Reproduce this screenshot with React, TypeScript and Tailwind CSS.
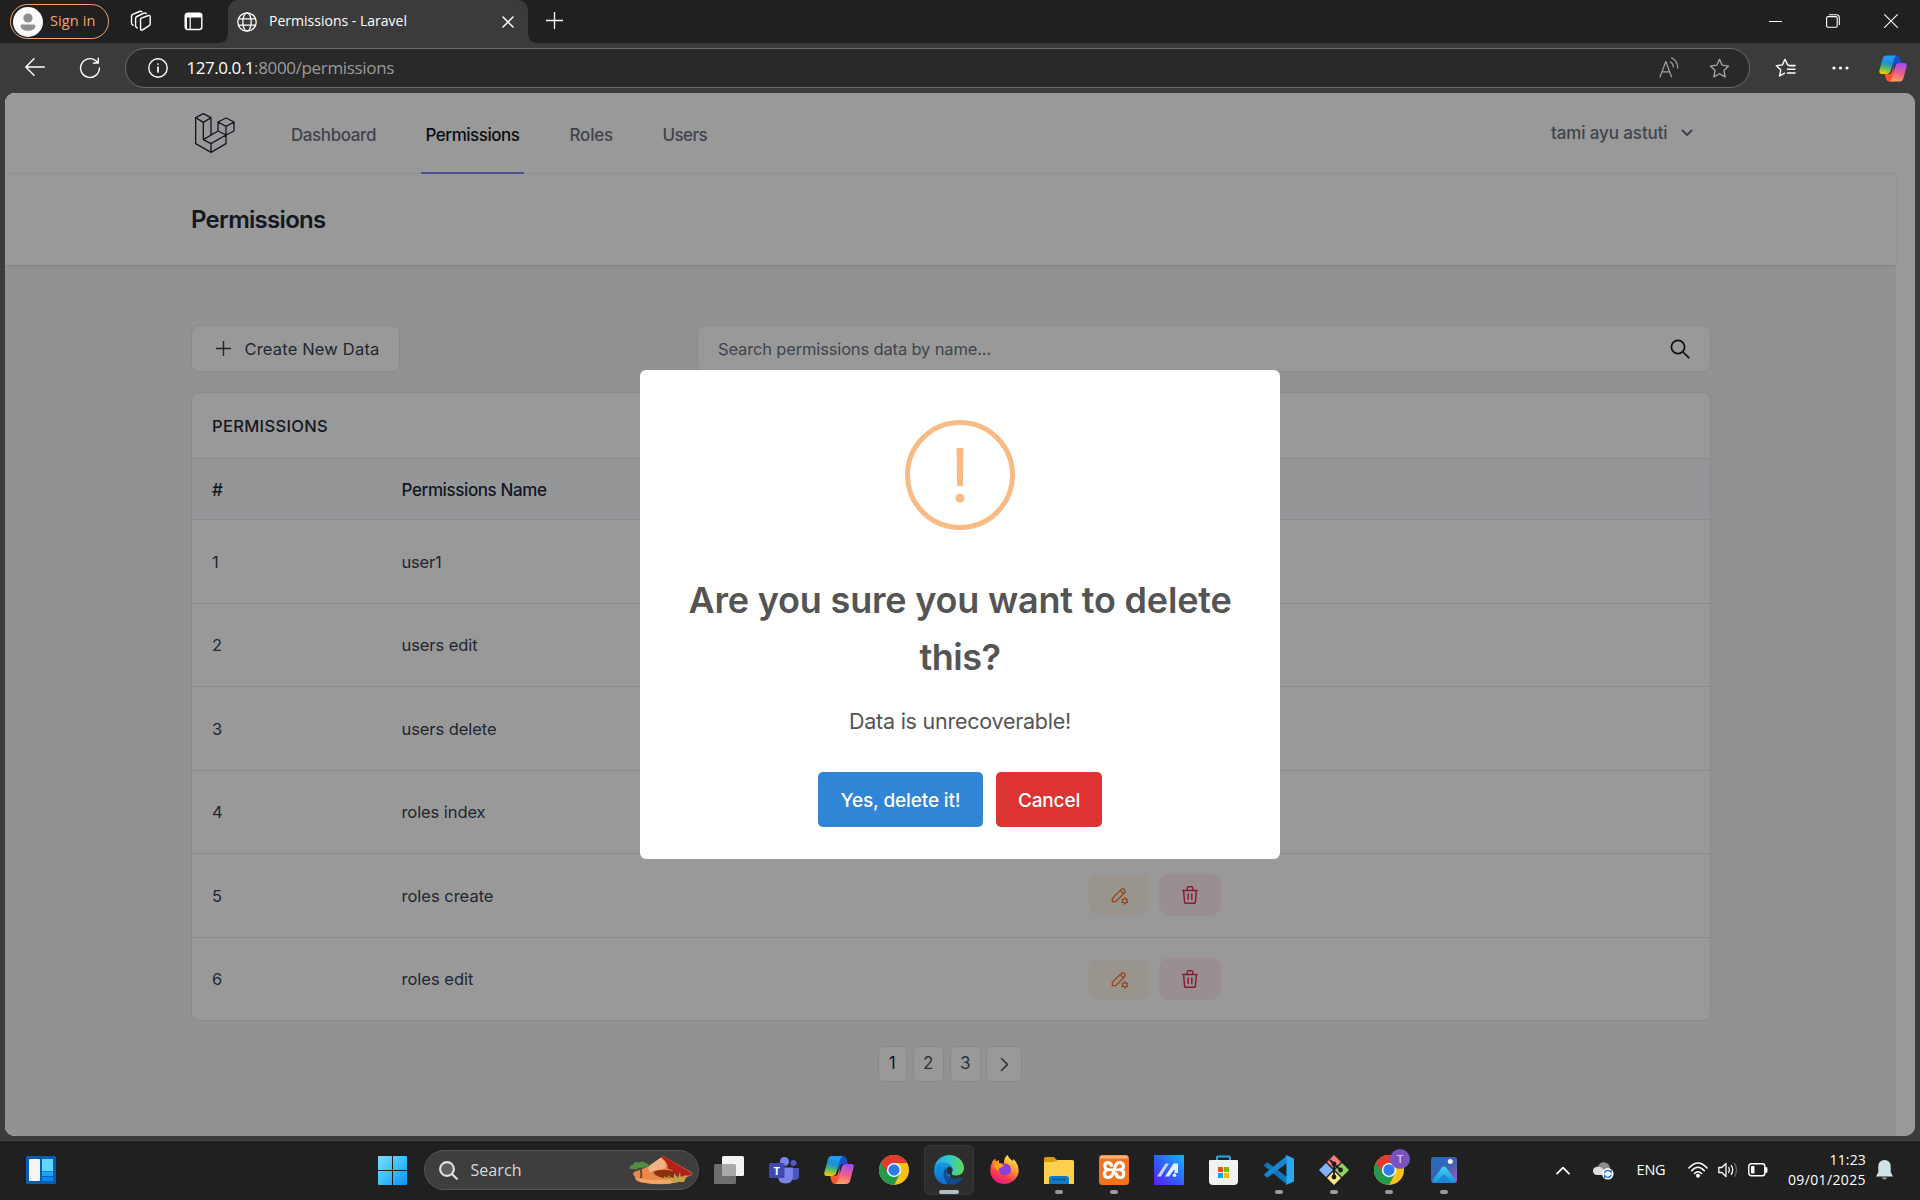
import React, { useLayoutEffect, useRef, useState } from "react";

/** Single line of text tracked so that it fills the given width. */
function Fit({ w, className = "", children }: { w: number; className?: string; children: string }) {
  const ref = useRef<HTMLSpanElement>(null);
  const [spacing, setSpacing] = useState(0);
  useLayoutEffect(() => {
    const el = ref.current;
    if (!el) return;
    const natural = el.getBoundingClientRect().width;
    setSpacing((w - natural) / children.length);
  }, []);
  return (
    <span ref={ref} className={"inline-block whitespace-nowrap " + className} style={{ letterSpacing: spacing + "px" }}>
      {children}
    </span>
  );
}

const line = { fill: "none", stroke: "currentColor", strokeLinecap: "round" as const, strokeLinejoin: "round" as const };

function TitleBar() {
  return (
    <div className="flex h-[43px] shrink-0 items-start bg-[#202020] text-white">
      <div className="mt-1 ml-[10px] flex h-[35px] w-[99px] shrink-0 items-center rounded-full border-[1.5px] border-[#f3a36b] pl-[2px]">
        <svg className="size-[30px] shrink-0" viewBox="0 0 30 30">
          <circle cx="15" cy="15" r="15" fill="#fafafa" />
          <circle cx="15" cy="11" r="4.6" fill="#8f8f8f" />
          <path d="M9 17.4h12q1.4 0 1.4 1.4c0 3-3 5-7.4 5s-7.4-2-7.4-5q0-1.4 1.4-1.4z" fill="#8f8f8f" />
        </svg>
        <Fit w={45.5} className="mb-px ml-[7px] text-[14.5px] leading-[20px] text-[#f3a36b]">Sign in</Fit>
      </div>
      <svg className="mt-[10px] ml-[21px] size-[23px] shrink-0" viewBox="0 0 23 23" {...line} strokeWidth="1.4">
        <path d="M10.5 9.6q0-1 .9-1.4l7-2.7q1.8-.5 1.8 1.2v7.4q0 1.1-1 1.6l-6.6 4.2q-2 1-2-1z" />
        <path d="M7.3 18l-.5-.3q-1.2-.7-1.2-2V8.5q0-1.500 1.300-2l7-3.300q1.600-.6 2.300.3" />
        <path d="M3.200 15.300q-1.700-.7-1.700-2.300V6.200q0-1.300 1.200-1.900L9.500 1.500q1.400-.5 2.200.2" />
      </svg>
      <svg className="mt-[12px] ml-[31px] size-[19px] shrink-0" viewBox="0 0 19 19" fill="none">
        <rect x="1.200" y="1.200" width="16.600" height="16.300" rx="2.500" stroke="#fff" strokeWidth="1.400" />
        <path d="M1 5.500V3q0-2 2-2h13q2 0 2 2v2.500zM1 5h2v12H2z" fill="#fff" />
        <path d="M6.200 5v12.500" stroke="#fff" strokeWidth="1.200" />
      </svg>
      <svg className="ml-[15px] h-[43px] w-[10px] shrink-0" viewBox="0 0 10 43">
        <path d="M0 43Q10 43 10 33V43z" fill="#3b3b3b" />
      </svg>
      <div className="flex h-[43px] w-[300px] shrink-0 items-center rounded-t-[10px] bg-[#3b3b3b] pl-[9px]">
        <svg className="size-[20px] shrink-0" viewBox="0 0 20 20" {...line} strokeWidth="1.300">
          <circle cx="10" cy="10" r="9.200" />
          <ellipse cx="10" cy="10" rx="4.200" ry="9.200" />
          <path d="M1.500 6.800h17M1.500 13.200h17" />
        </svg>
        <Fit w={138} className="mb-[2px] ml-[12px] text-[14px] leading-[20px]">Permissions - Laravel</Fit>
        <svg className="ml-[95px] size-[12px] shrink-0" viewBox="0 0 12 12" {...line} strokeWidth="1.500">
          <path d="M1 1l10 10M11 1L1 11" />
        </svg>
      </div>
      <svg className="h-[43px] w-[10px] shrink-0" viewBox="0 0 10 43">
        <path d="M10 43Q0 43 0 33V43z" fill="#3b3b3b" />
      </svg>
      <svg className="mt-[12px] ml-[8px] size-[17px] shrink-0" viewBox="0 0 17 17" stroke="#fff" strokeWidth="1.300">
        <path d="M8.500 0v17M0 8.500h17" />
      </svg>
      <div className="ml-auto flex h-[42px] shrink-0 items-center pr-[22px]">
        <svg className="h-[14px] w-[13px]" viewBox="0 0 13 14" stroke="#fff">
          <path d="M0 7.500h13" />
        </svg>
        <svg className="ml-[44px] size-[14px]" viewBox="0 0 14 14" fill="none" stroke="#fff" strokeWidth="1.100">
          <rect x=".6" y="2.600" width="10.600" height="10.600" rx="1.500" />
          <path d="M3 .7h7.500q2.800 0 2.800 2.800V11" />
        </svg>
        <svg className="ml-[44px] size-[14px]" viewBox="0 0 14 14" {...line} strokeWidth="1.100">
          <path d="M.6.6l12.800 12.800M13.400.6L.6 13.400" />
        </svg>
      </div>
    </div>
  );
}

function Copilot({ id, className }: { id: string; className: string }) {
  return (
    <svg className={className} viewBox="0 0 30 28">
      <defs>
        <linearGradient id={id + "a"} x1="0.500" y1="0" x2="0.300" y2="1">
          <stop offset="0" stopColor="#1ea0f2" />
          <stop offset=".4" stopColor="#1f8fd8" />
          <stop offset=".65" stopColor="#4fb56a" />
          <stop offset="1" stopColor="#f4cf00" />
        </linearGradient>
        <linearGradient id={id + "b"} x1="0.600" y1="0" x2="0.400" y2="1">
          <stop offset="0" stopColor="#a04ef0" />
          <stop offset=".5" stopColor="#ec5a8e" />
          <stop offset="1" stopColor="#ffa15c" />
        </linearGradient>
      </defs>
      <path d="M14 0h5q2.500 0 3.300 2.600L24 8h-5q-2 0-2.700 2l-2 6z" fill="#1750c9" />
      <path d="M16 28h-5q-2.500 0-3.300-2.600L6 20h5q2 0 2.700-2l2-6z" fill="#f8562f" />
      <path d="M8 0h11q-2 .5-2.700 3l-4 14q-1 3-4 3H3q-3.500 0-2.500-4L4 3q1-3 4-3z" fill={`url(#${id}a)`} />
      <path d="M22 28H11q2-.5 2.700-3l4-14q1-3 4-3H27q3.500 0 2.500 4L26 25q-1 3-4 3z" fill={`url(#${id}b)`} />
    </svg>
  );
}

const star = "M10 1.300l2.600 5.600 6.100.8-4.500 4.200 1.200 6.100L10 15l-5.400 3 1.200-6.100L1.300 7.700l6.100-.8z";

function Toolbar() {
  return (
    <div className="flex h-[50px] shrink-0 items-center bg-[#3b3b3b] text-white">
      <svg className="mb-[2px] ml-[25px] h-[18px] w-[20px] shrink-0" viewBox="0 0 20 18" {...line} strokeWidth="1.400">
        <path d="M19.300 9H.8M9 .8L.8 9l8.200 8.200" />
      </svg>
      <svg className="mb-px ml-[34px] size-[22px] shrink-0" viewBox="0 0 22 22" {...line} strokeWidth="1.400">
        <path d="M20.400 11a9.400 9.400 0 1 1-3.500-7.300L19.300 6M19.300 1.200V6h-4.900" />
      </svg>
      <div className="ml-[24px] flex h-[40px] w-[1625px] shrink-0 items-center rounded-full border border-[#696969] bg-[#292929]">
        <svg className="ml-[21.500px] size-[20px] shrink-0" viewBox="0 0 20 20" {...line} strokeWidth="1.400">
          <circle cx="10" cy="10" r="9.200" />
          <path d="M10 9v5M10 6v.1" strokeWidth="1.700" />
        </svg>
        <div className="ml-[19px] flex text-[17px] leading-[24px]">
          <Fit w={67.500}>127.0.0.1</Fit>
          <Fit w={140} className="text-[#9a9a9a]">:8000/permissions</Fit>
        </div>
        <svg className="mr-[30px] mb-px ml-auto h-[21px] w-[20px] shrink-0 text-[#a0a0a0]" viewBox="0 0 20 21" {...line} strokeWidth="1.200">
          <path d="M1 20L6.800 4.500 12.600 20M3 14.800h7.600M11.500 5q2.800 1.600 2.800 5M12.500.8Q18.600 3.800 18.800 11" />
        </svg>
        <svg className="mr-[19.500px] size-[21px] shrink-0 text-[#a8a8a8]" viewBox="0 0 20 20" {...line} strokeWidth="1.200">
          <path d={star} />
        </svg>
      </div>
      <svg className="ml-[24.500px] h-[22px] w-[21px] shrink-0" viewBox="0 0 21 20" {...line} strokeWidth="1.400">
        <path d="M20 7.500h-5.500l-1.900-.6L10 1.300 7.400 6.900l-6.100.8 4.500 4.200L4.600 18l5-2.800M12.500 11.300H20M12.500 15H20M14 7.700h6" />
      </svg>
      <svg className="ml-[36px] h-[4px] w-[17px] shrink-0" viewBox="0 0 17 4" fill="#fff">
        <circle cx="2" cy="2" r="1.600" /><circle cx="8.500" cy="2" r="1.600" /><circle cx="15" cy="2" r="1.600" />
      </svg>
      <Copilot id="cpt" className="ml-[30px] h-[27px] w-[28px] shrink-0" />
    </div>
  );
}

function Nav() {
  return (
    <div className="flex h-[81px] w-[1891px] shrink-0 items-center border-b border-gray-100 bg-white pl-[186px] text-[17px] font-[450] text-gray-500">
      <svg className="ml-[4px] size-[40px] shrink-0 text-gray-800" viewBox="587 340 120 120" {...line} strokeWidth="4">
        <path d="M612 342l23 12-23 14-23-14zM589 354v78l46 26 45-26v-26M612 368v52l23 12v26M635 354v52M612 420l44-26M635 432l45-26M680 355l24 12-24 13-24-13zM704 367v27l-24 12-24-12v-27M680 380v26" />
      </svg>
      <Fit w={85} className="mt-[5px] ml-[56px]">Dashboard</Fit>
      <div className="mt-[1px] ml-[45px] flex h-[81px] w-[103px] items-center border-b-[2.500px] border-indigo-400 pl-[4.500px] text-gray-900">
        <Fit w={94} className="mt-[7px]">Permissions</Fit>
      </div>
      <Fit w={43.500} className="mt-[5px] ml-[45.500px]">Roles</Fit>
      <Fit w={44.500} className="mt-[5px] ml-[49.500px]">Users</Fit>
      <Fit w={116.500} className="mt-px ml-[844px]">tami ayu astuti</Fit>
      <svg className="mb-px ml-[13.500px] h-[8px] w-[12px]" viewBox="0 0 12 8" {...line} strokeWidth="2.100">
        <path d="M1.500 1.500L6 6l4.500-4.500" />
      </svg>
    </div>
  );
}

const rows: [string, string, number][] = [
  ["1", "user1", 40],
  ["2", "users edit", 76],
  ["3", "users delete", 95],
  ["4", "roles index", 84],
  ["5", "roles create", 92],
  ["6", "roles edit", 72],
];

function Table() {
  return (
    <div className="mt-[20px] w-[1520px] overflow-hidden rounded-lg border border-gray-200 bg-white text-[16.500px] text-gray-700">
      <div className="flex h-[65px] items-center pt-px pl-[20px] font-[550] text-gray-800">
        <Fit w={116}>PERMISSIONS</Fit>
      </div>
      <div className="flex h-[62px] items-center border-y border-gray-200 bg-[#f8fafc] pt-[3px] pl-[20px] text-[17px] font-[450] text-gray-800">
        <div className="w-[189.500px]"><Fit w={11}>#</Fit></div>
        <Fit w={145}>Permissions Name</Fit>
      </div>
      {rows.map(([n, name, w], i) => (
        <div key={n} className={"flex items-center pl-[20px] " + (i ? "h-[83.500px] border-t border-gray-200" : "h-[82.500px]")}>
          <span className="mt-[2px] w-[189.500px]">{n}</span>
          <div className="mt-[2px] w-[687.500px]"><Fit w={w}>{name}</Fit></div>
          <div className="mr-[10px] flex h-[40px] w-[60px] items-center justify-center rounded-lg bg-orange-50 text-[#f0701c]">
            <svg className="size-[20px]" viewBox="0 0 24 24" {...line} strokeWidth="1.500">
              <path d="M4 20h4L18.500 9.500a2.830 2.830 0 1 0-4-4L4 16v4M13.500 6.500l4 4" />
              <path d="M19 15l1.100 2.100 2.400-.1-1.300 2 1.300 2-2.400-.1L19 23l-1.100-2.100-2.400.1 1.300-2-1.300-2 2.400.1z" strokeWidth="1.300" />
            </svg>
          </div>
          <div className="flex h-[42px] w-[62px] items-center justify-center rounded-[10px] bg-[#ffedf0] text-[#e8305c]">
            <svg className="size-[22px]" viewBox="0 0 24 24" {...line} strokeWidth="1.600">
              <path d="M4 7h16M10 11v6M14 11v6M5 7l1 12a2 2 0 0 0 2 2h8a2 2 0 0 0 2-2l1-12M9 7V4a1 1 0 0 1 1-1h4a1 1 0 0 1 1 1v3" />
            </svg>
          </div>
        </div>
      ))}
    </div>
  );
}

function Modal() {
  return (
    <div className="absolute top-[277px] left-[635px] flex h-[489px] w-[640px] flex-col items-center rounded-[6px] bg-white text-[#545454]">
      <svg className="mt-[50px] size-[110px] shrink-0" viewBox="0 0 110 110">
        <circle cx="55" cy="55" r="52.500" fill="none" stroke="#f8bb86" strokeWidth="5" />
        <path d="M51.500 28h7l-.6 38h-5.800z" fill="#f8bb86" />
        <circle cx="55" cy="78" r="4.500" fill="#f8bb86" />
      </svg>
      <div className="mt-[42px] flex flex-col items-center text-[36px] leading-[56.500px] font-[560]">
        <Fit w={543}>Are you sure you want to delete</Fit>
        <Fit w={81}>this?</Fit>
      </div>
      <Fit w={222} className="mt-[18.500px] text-[21.500px] leading-[34px] font-[380]">Data is unrecoverable!</Fit>
      <div className="mt-[34.500px] flex gap-[13px] text-[19px] font-[480] text-white">
        <div className="flex h-[55px] w-[165px] items-center justify-center rounded-[5px] bg-[#3085d6] pt-[3px]">
          <Fit w={120}>Yes, delete it!</Fit>
        </div>
        <div className="flex h-[55px] w-[106px] items-center justify-center rounded-[5px] bg-[#dd3333] pt-[3px]">
          <Fit w={62}>Cancel</Fit>
        </div>
      </div>
    </div>
  );
}

function Page() {
  const pager = "flex h-[36px] items-center justify-center rounded-md border border-gray-200 bg-white text-[17px]";
  return (
    <div className="relative mx-[5px] flex h-[1043px] shrink-0 flex-col overflow-hidden rounded-[10px] bg-white font-[Inter,sans-serif]">
      <Nav />
      <div className="z-0 flex h-[91px] w-[1891px] shrink-0 items-center bg-white pl-[186px] text-[24px] font-[560] text-gray-800 shadow">
        <Fit w={134.500}>Permissions</Fit>
      </div>
      <div className="w-[1891px] grow bg-[#f3f3f6] pt-[60px] pl-[186px]">
        <div className="flex w-[1520px] justify-between">
          <div className="flex h-[47px] w-[209px] items-center rounded-lg border border-gray-200 bg-white pl-[23.500px] text-[16.500px] text-gray-700">
            <svg className="size-[15px]" viewBox="0 0 15 15" stroke="currentColor" strokeWidth="1.400"><path d="M7.500 0v15M0 7.500h15" /></svg>
            <Fit w={135} className="mt-[2px] ml-[14px]">Create New Data</Fit>
          </div>
          <div className="flex h-[47px] w-[1014px] items-center justify-between rounded-lg border border-gray-200 bg-white pr-[20.500px] pl-[20px] text-[16.500px] text-gray-500">
            <Fit w={273} className="mt-[2px]">Search permissions data by name...</Fit>
            <svg className="size-[20px] text-gray-900" viewBox="0 0 20 20" {...line} strokeWidth="1.700">
              <circle cx="8" cy="8" r="6.600" /><path d="M13 13l5.700 5.700" />
            </svg>
          </div>
        </div>
        <Table />
        <div className="mt-[25px] flex w-[1518px] justify-center text-gray-600">
          <div className={pager + " mr-[6px] w-[29px] text-sky-950"}>1</div>
          <div className={pager + " mr-[6px] w-[31px]"}>2</div>
          <div className={pager + " mr-[5.500px] w-[31px]"}>3</div>
          <div className={pager + " w-[36px]"}>
            <svg className="h-[15px] w-[9px]" viewBox="0 0 9 15" {...line} strokeWidth="1.600"><path d="M1.500 1.500l6 6-6 6" /></svg>
          </div>
        </div>
      </div>
      <div className="absolute inset-0 bg-black/40" />
      <Modal />
    </div>
  );
}

function Chrome({ id }: { id: string }) {
  return (
    <svg className="size-[30px]" viewBox="0 0 30 30">
      <clipPath id={id}><circle cx="15" cy="15" r="15" /></clipPath>
      <g clipPath={`url(#${id})`}>
        <rect width="30" height="30" fill="#fbc116" />
        <path d="M15 15L21.100 18.500 14 32H-2V4l4-4z" fill="#219a4c" />
        <path d="M1.500 7L8.900 18.500 15 8h16V-2H0z" fill="#e13b30" />
      </g>
      <circle cx="15" cy="15" r="7.100" fill="#fff" />
      <circle cx="15" cy="15" r="5.700" fill="#2c7cf0" />
    </svg>
  );
}

function Edge() {
  return (
    <svg className="size-[30px]" viewBox="0 0 30 30">
      <defs>
        <linearGradient id="eg1" x1="0" y1=".5" x2="1" y2=".5">
          <stop offset="0" stopColor="#29a5e2" /><stop offset=".5" stopColor="#30c6cf" /><stop offset="1" stopColor="#62d84c" />
        </linearGradient>
        <linearGradient id="eg2" x1="0" y1="0" x2="0" y2="1">
          <stop offset="0" stopColor="#1499dd" /><stop offset="1" stopColor="#0c6ed0" />
        </linearGradient>
      </defs>
      <path d="M.3 13C1.500 5 8 0 15 0c9 0 15 6.500 15 13 0 4.600-3.300 7.500-7.500 7.500-4 0-5.700-1.500-4.800-2.800 1.800-2.500 1.300-6.200-2.700-7.700z" fill="url(#eg1)" />
      <path d="M.2 13.500C1 8.500 6 7.500 9.500 7.500c5.500 0 9 3.500 9 7 0 1.300-.4 2.400-1 3.200l-5 11.900C5 29 0 22.500 0 15.500z" fill="url(#eg2)" />
      <path d="M12 12.500C8 16 8.500 27 17 29.800c5 0 9-2.800 11-6.200.4-.8-.2-1.200-.9-.9-6.500 2.600-14.600.2-15-6.700z" fill="#0e4f94" />
      <path d="M13 13q1.500-1.800 3.700-1 2.400 2.200 1 5.700-.7 1.300.8 2-5 .5-5.900-3.200-.4-2.200.4-3.500z" fill="#2a2d30" />
    </svg>
  );
}

function AppIcon({ name }: { name: string }) {
  switch (name) {
    case "taskview":
      return (
        <svg className="h-[28px] w-[30px]" viewBox="0 0 30 28">
          <rect x="8" y="0" width="22" height="20" rx="1.500" fill="#f3f3f3" />
          <rect x="0" y="8" width="22" height="20" rx="1.500" fill="#8c8c8c" fillOpacity=".72" />
        </svg>
      );
    case "teams":
      return (
        <svg className="h-[27px] w-[30px]" viewBox="0 0 30 27">
          <circle cx="24.500" cy="6" r="3" fill="#5059c9" />
          <path d="M22 11h8v8q0 4-4 4h-4z" fill="#4b53bc" />
          <circle cx="15.500" cy="4.500" r="4.500" fill="#7b83eb" />
          <path d="M9 10.500h15V19q0 7.500-7.500 7.500T9 19z" fill="#7b83eb" />
          <rect y="6" width="15.500" height="15" rx="1.200" fill="#4049ad" />
          <text x="7.700" y="17.500" fontSize="11" fontWeight="700" textAnchor="middle" fill="#fff" fontFamily="Open Sans, sans-serif">T</text>
        </svg>
      );
    case "copilot":
      return <Copilot id="cpb" className="h-[28px] w-[30px]" />;
    case "chrome":
      return <Chrome id="ch1" />;
    case "edge":
      return <Edge />;
    case "firefox":
      return (
        <svg className="h-[30px] w-[29px]" viewBox="0 0 29 30">
          <defs>
            <linearGradient id="ff" x1=".8" y1="0" x2=".3" y2="1">
              <stop offset="0" stopColor="#fff44f" /><stop offset=".4" stopColor="#ff9a2a" /><stop offset=".7" stopColor="#ff4048" /><stop offset="1" stopColor="#e31587" />
            </linearGradient>
          </defs>
          <path d="M2.500 6.500L5 3.500l1 3 3-1.500v3l5 1q-.5-6 3.500-9 1 3 5 6l1-2q5.200 5 5.200 11.500C28.700 23 22 29 14.300 29 6 29 .3 23 .3 15.500q0-5 2.200-9z" fill="url(#ff)" />
          <circle cx="15" cy="14.500" r="6" fill="#8a3fe0" />
          <path d="M4 9q6-2 10 1.500l-2.500 2q-3 .3-3.200 3.500Q4 14 4 9z" fill="#ff9e1f" />
        </svg>
      );
    case "files":
      return (
        <svg className="h-[27px] w-[30px]" viewBox="0 0 30 27">
          <path d="M0 1.500Q0 0 1.500 0h8.300L13 3h-1v4H0z" fill="#dc9a06" />
          <path d="M0 5h9.500L13 3h15.500Q30 3 30 4.500V27H0z" fill="#fdcf4c" />
          <path d="M5 27v-5q0-3 3-3h14q3 0 3 3v5z" fill="#0f7ac8" />
          <path d="M8.500 22.500h13" stroke="#07508c" strokeWidth="1.200" />
        </svg>
      );
    case "xampp":
      return (
        <svg className="size-[30px]" viewBox="0 0 30 30">
          <rect width="30" height="30" rx="3.500" fill="#f3741f" />
          <rect x="1" y=".6" width="28" height="3" rx="1.500" fill="#ffb27c" />
          <path
            d="M12.500 10.500Q11.500 7.500 8.500 7.700T6 11.500t3.500 3Q5.200 15.500 5.400 19t3.600 3.500 4.500-3l3-8.500q1.200-3.500 4.500-3.300t3.400 3.500-3.400 3.300q4 .8 3.800 4.500T21 22.500t-4-4"
            fill="none" stroke="#fff" strokeWidth="3.200" strokeLinejoin="round" strokeLinecap="round"
          />
          <path d="M10 14.800h10" stroke="#fff" strokeWidth="2.600" />
        </svg>
      );
    case "myasus":
      return (
        <svg className="size-[30px]" viewBox="0 0 30 30">
          <defs>
            <linearGradient id="ma" x1="0" y1="1" x2="1" y2="0"><stop offset="0" stopColor="#5a1df0" /><stop offset=".5" stopColor="#2f62ff" /><stop offset="1" stopColor="#10b6ff" /></linearGradient>
          </defs>
          <rect width="30" height="30" fill="url(#ma)" />
          <path d="M3 21.500L11.500 8.500H15L6.700 21.500z" fill="#c3d5ff" />
          <path d="M11 21.500L19.500 8.500H24v9.500h-3.500v-4L15 21.500z" fill="#e6eeff" />
          <circle cx="20.500" cy="20.300" r="1.700" fill="#fff" />
        </svg>
      );
    case "store":
      return (
        <svg className="mr-px h-[30px] w-[29px]" viewBox="0 0 29 30">
          <path d="M8 7V2.500Q8 1.500 9 1.500h11q1 0 1 1V7" fill="none" stroke="#2aa6e0" strokeWidth="2" />
          <path d="M0 6q0-1 1-1h27q1 0 1 1v20q0 4-4 4H4q-4 0-4-4z" fill="#f2f2f2" />
          <path d="M9 12h5v5H9z" fill="#f25022" /><path d="M15 12h5v5h-5z" fill="#7fba00" />
          <path d="M9 18h5v5H9z" fill="#00a4ef" /><path d="M15 18h5v5h-5z" fill="#ffb900" />
        </svg>
      );
    case "vscode":
      return (
        <svg className="size-[30px]" viewBox="0 0 30 30">
          <path d="M.6 9.500L2.500 7.700q.8-.6 1.600 0L23 22v7.500L.6 11.300q-.8-.9 0-1.800z" fill="#0d77c0" />
          <path d="M.6 20.500l1.900 1.800q.8.600 1.600 0L23 8V.5L.6 18.700q-.8.9 0 1.800z" fill="#1688cf" />
          <path d="M22.500.3L30 3.500v23l-7.500 3.200q-.8.200-1.500-.4 1.500.700 1.500-1V2q0-1.700-1.500-1 .7-.9 1.500-.7z" fill="#27a8f0" />
        </svg>
      );
    case "git":
      return (
        <svg className="size-[30px]" viewBox="0 0 30 30">
          <path d="M15 0l7 7-7 7-7-7z" fill="#f77c7c" />
          <path d="M7 8l7 7-7 7-7-7z" fill="#80b3ff" />
          <path d="M23 8l7 7-7 7-7-7z" fill="#8dd35f" />
          <path d="M15 16l7 7-7 7-7-7z" fill="#ffe680" />
          <path d="M11 5l4 4v14M15 9l6.500 6" stroke="#1b1b1b" strokeWidth="1.800" fill="none" />
          <circle cx="15" cy="9" r="2.400" fill="#1b1b1b" /><circle cx="21.500" cy="15" r="2.400" fill="#1b1b1b" /><circle cx="15" cy="22" r="2.400" fill="#1b1b1b" />
        </svg>
      );
    case "chromeT":
      return (
        <div className="relative">
          <Chrome id="ch2" />
          <div className="absolute -top-[6px] left-[16px] flex size-[20px] items-center justify-center rounded-full bg-[#7a53c0] text-[11px] font-semibold text-[#d5c4ee]">T</div>
        </div>
      );
    default:
      return (
        <svg className="size-[26px]" viewBox="0 0 26 26">
          <defs>
            <linearGradient id="ph" x1="0" y1="0" x2="1" y2="1"><stop offset="0" stopColor="#1c6fc0" /><stop offset=".5" stopColor="#3d62b0" /><stop offset="1" stopColor="#a65cc0" /></linearGradient>
            <linearGradient id="ph2" x1="0" y1="0" x2="0" y2="1"><stop offset="0" stopColor="#44d3f7" /><stop offset="1" stopColor="#1491dd" /></linearGradient>
          </defs>
          <rect width="26" height="26" rx="3" fill="url(#ph)" />
          <path d="M1 24L11 10.500q2-2 4 0L25.500 24q-1 2-3 2H3q-1.500 0-2-2z" fill="url(#ph2)" />
          <path d="M5 26l6-7q2-2 4 0l6 7z" fill="#1b84d4" />
          <circle cx="19.300" cy="4.500" r="2.500" fill="#f2f2f2" />
        </svg>
      );
  }
}

const apps: [string, boolean][] = [
  ["taskview", false], ["teams", false], ["copilot", false], ["chrome", false], ["edge", true], ["firefox", false],
  ["files", true], ["xampp", true], ["myasus", false], ["store", false], ["vscode", true], ["git", true], ["chromeT", true], ["photos", true],
];

function Taskbar() {
  return (
    <div className="flex h-[60px] shrink-0 items-center border-t border-[#474747] bg-[#202020] pb-px text-white">
      <svg className="ml-[26px] h-[28px] w-[30px] shrink-0" viewBox="0 0 30 28">
        <rect width="30" height="28" rx="1.500" fill="#0a5cad" />
        <rect x="3" y="3" width="11" height="22" rx="1" fill="#f4f4f4" />
        <rect x="16" y="3" width="11" height="12" fill="#62d6ff" />
        <rect x="16" y="15.500" width="11" height="4.500" fill="#1fa3fb" />
        <rect x="16" y="21" width="11" height="4" fill="#0a86ef" />
      </svg>
      <svg className="ml-[322px] size-[29px] shrink-0" viewBox="0 0 29 29">
        <defs>
          <linearGradient id="win" x1="0" y1="0" x2="1" y2="1"><stop offset="0" stopColor="#7fdcff" /><stop offset=".5" stopColor="#3cc0fb" /><stop offset="1" stopColor="#0a93f8" /></linearGradient>
        </defs>
        <path d="M1 0h13v14H0V1q0-1 1-1zM15 0h13q1 0 1 1v13H15zM0 15h14v14H1q-1 0-1-1zM15 15h14v13q0 1-1 1H15z" fill="url(#win)" />
      </svg>
      <div className="mr-[5px] ml-[17px] flex h-[40px] w-[275px] shrink-0 items-center rounded-full border border-[#555] bg-[#3e3e3e]">
        <svg className="ml-[13.500px] size-[19px] shrink-0 text-[#e3e3e3]" viewBox="0 0 19 19" {...line} strokeWidth="2.100">
          <circle cx="8" cy="8" r="6.900" fill="#5d5d5d" /><path d="M13 13l4.800 4.800" />
        </svg>
        <Fit w={51} className="ml-[13px] text-[16px] text-[#dadada]">Search</Fit>
        <svg className="mt-px ml-[107.500px] h-[29px] w-[64px] shrink-0" viewBox="0 0 64 29">
          <path d="M5 16q9-3 15-6L33 1q2-1 4 .5L62 16q2.500 2 0 3.500l-8 3-2 3q-20 5-40 1-7-2-6-6-3-2-1-4.500z" fill="#e8894a" />
          <path d="M32 1.500q2.500-2 5 0l25.500 15.500q1 2-2 2.500-10 1-17-5l-5-2q1-6-6.500-11z" fill="#b4201a" />
          <path d="M32 1.500q6.500 6.500 4 11-10 1-14 4-3-2-3-6z" fill="#f3b184" />
          <path d="M24 16q14-6 32 4l-14 2q-14 1-18-6z" fill="#8e2f12" />
          <path d="M6 22q20 4 46 0l-3 4q-18 4-36 0z" fill="#f5a768" />
          <path d="M12 22q1-6-1-10" stroke="#5d4230" strokeWidth="1.800" fill="none" />
          <path d="M0 13q1-4 4-4.500Q6 5 10 6.500q3-2 6 0 4 1 4.500 4.500-4-1-6 1-5-1-8 2-3-2-6.500-1z" fill="#4f8f3f" />
          <path d="M43 26l-3-6 5 3 0-6 4 5 2-6 1 6 6-3-3 7zM36 24l-1-4 3 2 2-3v5z" fill="#c2a24c" />
        </svg>
      </div>
      <div className="flex shrink-0 gap-[5px]">
        {apps.map(([name, running]) => (
          <div
            key={name}
            className={"relative flex size-[50px] items-center justify-center rounded-[5px] " + (name === "edge" ? "border border-[#383838] bg-[#2d2d2d]" : "")}
          >
            <AppIcon name={name} />
            {running && (
              <div className={"absolute h-[4px] rounded-full " + (name === "edge" ? "bottom-0 w-[20px] bg-[#afbfc3]" : "bottom-px w-[8px] bg-[#9a9a9a]")} />
            )}
          </div>
        ))}
      </div>
      <svg className="ml-[87px] h-[9px] w-[14px] shrink-0" viewBox="0 0 14 9" {...line} strokeWidth="1.700"><path d="M1 7.700l6-6 6 6" /></svg>
      <svg className="mt-[2px] ml-[23px] h-[18px] w-[21px] shrink-0" viewBox="0 0 21 18">
        <path d="M5 13Q0 12.500 0 8.500T5 4.500Q7 0 11 .3q5 .2 6 5.700l-3 7z" fill="#8b8b8b" />
        <path d="M3.500 13Q0 12 0 9t4-4q3-1 6 2l3 3v3z" fill="#dedede" />
        <circle cx="14.800" cy="11.800" r="5.800" fill="#f4f9ff" />
        <path d="M11.500 11q.8-2.500 3.400-2.600 2 0 3.200 1.800V8M18.200 12.800q-.8 2.500-3.400 2.600-2 0-3.200-1.800v2.200" fill="none" stroke="#1a70c8" strokeWidth="1.200" />
      </svg>
      <Fit w={29} className="ml-[22.500px] text-[14.500px]">ENG</Fit>
      <svg className="mb-[1px] ml-[22px] h-[16px] w-[20px] shrink-0" viewBox="0 0 20 16" {...line} strokeWidth="1.500">
        <path d="M.9 6Q10-4 19.100 6M3.700 8.800q6.300-7 12.600 0M6.500 11.500q3.500-3.700 7 0" /><circle cx="10" cy="13.700" r="1.200" fill="#fff" />
      </svg>
      <svg className="ml-[10px] h-[16px] w-[20px] shrink-0" viewBox="0 0 20 16" {...line} strokeWidth="1.300">
        <path d="M.8 5.500h3L8 1.500v13L3.800 10.500h-3zM10.700 5.500q1.500 2.500 0 5M13.200 3.500q3 4.500 0 9" /><path d="M16.500 1.500q4 6.500 0 13" stroke="#666" />
      </svg>
      <svg className="ml-[10px] h-[14px] w-[20px] shrink-0" viewBox="0 0 20 14" {...line} strokeWidth="1.400">
        <rect x=".8" y=".8" width="16" height="12" rx="2.500" /><rect x="3" y="3" width="3.500" height="7.600" rx=".8" fill="#fff" stroke="none" /><path d="M17.500 5h1.200v4h-1.200z" fill="#fff" />
      </svg>
      <div className="mb-px ml-auto flex shrink-0 flex-col items-end text-[14px] leading-[20px]">
        <Fit w={36.500}>11:23</Fit>
        <Fit w={78}>09/01/2025</Fit>
      </div>
      <svg className="mr-[27px] ml-[10px] h-[20px] w-[17px] shrink-0" viewBox="0 0 17 20">
        <path d="M8.500 0q6 0 6.200 6.500V12l2.300 4.500H0L2.300 12V6.500Q2.500 0 8.500 0z" fill="#cfe3e6" />
        <path d="M5.800 17.500h5.400q-.6 2-2.700 2t-2.700-2z" fill="#8d9b9d" />
      </svg>
    </div>
  );
}

export default function App() {
  return (
    <div className="flex h-[1200px] w-[1920px] flex-col overflow-hidden bg-[#3b3b3b] font-['Open_Sans',sans-serif]">
      <TitleBar />
      <Toolbar />
      <Page />
      <div className="h-[4px] shrink-0" />
      <Taskbar />
    </div>
  );
}
